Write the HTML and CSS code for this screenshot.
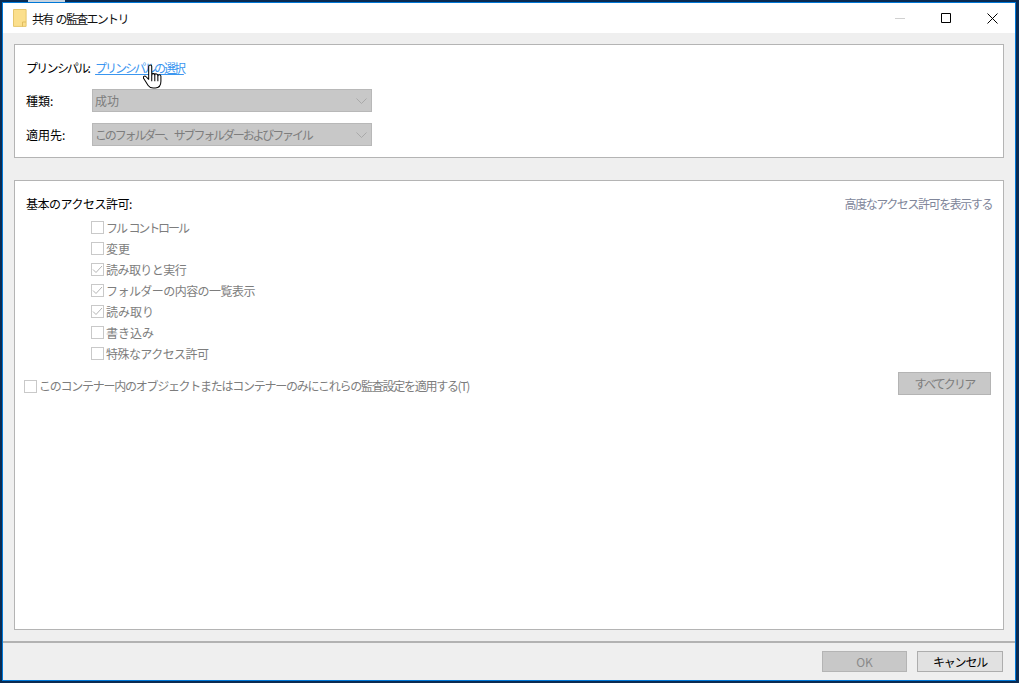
FILE: index.html
```html
<!DOCTYPE html>
<html lang="ja">
<head>
<meta charset="utf-8">
<title>共有 の監査エントリ</title>
<link rel="stylesheet" href="styles.css">
</head>
<body>
<div class="desktop-chip"></div>
<div class="window">
  <header class="titlebar">
    <svg class="folder" width="14" height="18" viewBox="0 0 14 18"><path d="M.5.500h12.600v16.900H.5z" fill="#fbdf8c" stroke="#e6c66c"/><path d="M9.500 13v4.500M9.500 13h3.500" stroke="#e0bd5f" fill="none"/></svg>
    <span class="title">共有 の監査エントリ</span>
    <div class="controls">
      <span class="ctl"><svg width="10" height="10" viewBox="0 0 10 10"><path d="M0 5.500h10" stroke="#d0d0d0"/></svg></span>
      <span class="ctl"><svg width="10" height="10" viewBox="0 0 10 10"><path d="M.5.500h9v9h-9z" fill="none" stroke="#000"/></svg></span>
      <span class="ctl"><svg width="11" height="11" viewBox="0 0 11 11"><path d="M.5.500l10 10M10.500.500l-10 10" stroke="#000" fill="none"/></svg></span>
    </div>
  </header>
  <main class="content">
    <section class="panel panel-top">
      <div class="row row-principal">
        <span class="label label-auto">プリンシパル:</span>
        <span class="link">プリンシパルの選択</span>
        <svg class="cursor" width="19" height="25" viewBox="0 0 18.500 24.500"><path d="M8.500 11V2.500C8.500.5 5.500.5 5.500 2.500V15L3 12.500C1.500 11-.5 12.500.8 14.500L5 21c1 1.500 2.500 2.500 5 2.500h2c3.500 0 5.500-2.500 5.500-6.500v-5c0-1.500-2-2-3-.5 0-2-2.500-2.500-3-1-.5-1.500-3-1.500-3 .5z" fill="#fff" stroke="#000" stroke-linejoin="round"/><path d="M8.500 11v6M11.500 10.500V17M14.500 11.500V17" stroke="#000" fill="none"/></svg>
      </div>
      <div class="row">
        <span class="label">種類:</span>
        <div class="select"><span>成功</span><svg width="11" height="6" viewBox="0 0 11 6"><path d="M.5.500l5 5 5-5" fill="none" stroke="#a9a9a9"/></svg></div>
      </div>
      <div class="row">
        <span class="label">適用先:</span>
        <div class="select"><span class="select-text">このフォルダー、サブフォルダーおよびファイル</span><svg width="11" height="6" viewBox="0 0 11 6"><path d="M.5.500l5 5 5-5" fill="none" stroke="#a9a9a9"/></svg></div>
      </div>
    </section>
    <section class="panel panel-main">
      <div class="perm-head">
        <span class="perm-title">基本のアクセス許可:</span>
        <span class="advanced">高度なアクセス許可を表示する</span>
      </div>
      <ul class="perms">
        <li><span class="box"></span><span class="kana">フル コントロール</span></li>
        <li><span class="box"></span>変更</li>
        <li><span class="box"><svg width="11" height="9" viewBox="0 0 11 9"><path d="M1 4.500l3 3 6-6.500" fill="none" stroke="#b4b4b4"/></svg></span><span class="mixed">読み取りと実行</span></li>
        <li><span class="box"><svg width="11" height="9" viewBox="0 0 11 9"><path d="M1 4.500l3 3 6-6.500" fill="none" stroke="#b4b4b4"/></svg></span><span class="mixed">フォルダーの内容の一覧表示</span></li>
        <li><span class="box"><svg width="11" height="9" viewBox="0 0 11 9"><path d="M1 4.500l3 3 6-6.500" fill="none" stroke="#b4b4b4"/></svg></span>読み取り</li>
        <li><span class="box"></span>書き込み</li>
        <li><span class="box"></span><span class="mixed">特殊なアクセス許可</span></li>
      </ul>
      <div class="apply-row">
        <span class="box"></span>
        <span class="apply-text">このコンテナー内のオブジェクトまたはコンテナーのみにこれらの監査設定を適用する(T)</span>
        <span class="btn btn-clear">すべてクリア</span>
      </div>
    </section>
  </main>
  <footer class="footer">
    <span class="btn btn-ok">OK</span>
    <span class="btn btn-cancel">キャンセル</span>
  </footer>
</div>
</body>
</html>
```
FILE: styles.css
```css
* { box-sizing: border-box; }
html, body { margin: 0; height: 683px; overflow: hidden; }
body {
  background: #0a2b52;
  font-family: "Noto Sans CJK JP", "Noto Sans", sans-serif;
  font-size: 12px;
  color: #000;
  padding: 2px 3px 2px 2px;
  position: relative;
}
.desktop-chip {
  position: absolute;
  left: 28px;
  top: 0;
  width: 37px;
  height: 2px;
  background: #c8d4e0;
}
.window {
  height: 679px;
  border: 1px solid #0078d7;
  background: #efefef;
  display: flex;
  flex-direction: column;
}
.titlebar {
  height: 30px;
  flex: none;
  background: #fff;
  display: flex;
  align-items: center;
  padding-left: 10px;
}
.folder { flex: none; }
.title { margin-left: 5px; font-size: 12px; color: #111; letter-spacing: -1.7px; word-spacing: 2px; }
.controls { margin-left: auto; display: flex; height: 100%; }
.ctl {
  width: 46px;
  display: flex;
  align-items: center;
  justify-content: center;
}
.content {
  flex: 1;
  padding: 11px;
  display: flex;
  flex-direction: column;
  gap: 22px;
  border-bottom: 2px solid #b2b2b2;
}
.panel {
  background: #fff;
  border: 1px solid #b4b4b4;
}
.panel-top {
  height: 114px;
  padding: 10px 11px 0;
}
.panel-main {
  flex: 1;
  padding: 12px 11px 0 9px;
}
.row { display: flex; align-items: center; height: 23px; margin-bottom: 11px; }
.row-principal { position: relative; height: 24px; margin-bottom: 10px; }
.label { width: 66px; flex: none; font-size: 12px; }
.label-auto { width: auto; margin-right: 6px; letter-spacing: -1.7px; }
.link { color: #3a96f0; text-decoration: underline; font-size: 12px; letter-spacing: -2.1px; }
.cursor { position: absolute; left: 117px; top: 9px; }
.select {
  width: 280px;
  height: 23px;
  background: #c8c8c8;
  border: 1px solid #b8b8b8;
  color: #7d7d7d;
  display: flex;
  align-items: center;
  justify-content: space-between;
  padding: 0 4px 0 2px;
  font-size: 12px;
  white-space: nowrap;
}
.select-text { letter-spacing: -2.15px; }
.perm-head { display: flex; justify-content: space-between; align-items: center; height: 20px; padding-left: 2px; }
.perm-title { font-size: 12px; letter-spacing: -0.5px; }
.advanced { color: #80869a; font-size: 12px; letter-spacing: -1.43px; }
.perms {
  list-style: none;
  margin: 4px 0 0;
  padding: 0 0 0 67px;
  color: #7d7d7d;
}
.perms li { display: flex; align-items: center; height: 21px; }
.kana { letter-spacing: -2.1px; word-spacing: 2px; white-space: pre; }
.mixed { letter-spacing: -0.55px; }
.box {
  width: 13px;
  height: 13px;
  flex: none;
  border: 1px solid #c9c9c9;
  background: #fff;
  margin-right: 2px;
  display: flex;
  align-items: center;
  justify-content: center;
}
.apply-row {
  display: flex;
  align-items: center;
  height: 24px;
  margin-top: 9px;
  color: #7d7d7d;
}
.apply-row .box { margin-top: 2px; }
.apply-text { letter-spacing: -1.26px; white-space: nowrap; }
.btn {
  display: flex;
  align-items: center;
  justify-content: center;
  height: 23px;
  font-size: 12px;
  border: 1px solid #b4b4b4;
}
.btn-clear {
  margin-left: auto;
  margin-right: 1px;
  margin-bottom: 4px;
  width: 93px;
  background: #c8c8c8;
  color: #7d7d7d;
  letter-spacing: -1.8px;
}
.footer {
  height: 37px;
  flex: none;
  display: flex;
  justify-content: flex-end;
  align-items: center;
  gap: 10px;
  padding: 0 12px 1px 0;
}
.btn-ok { width: 85px; height: 21px; background: #c8c8c8; color: #8a8a8a; }
.btn-cancel { width: 86px; height: 21px; background: #e1e1e1; border-color: #adadad; letter-spacing: -1.2px; }
```
